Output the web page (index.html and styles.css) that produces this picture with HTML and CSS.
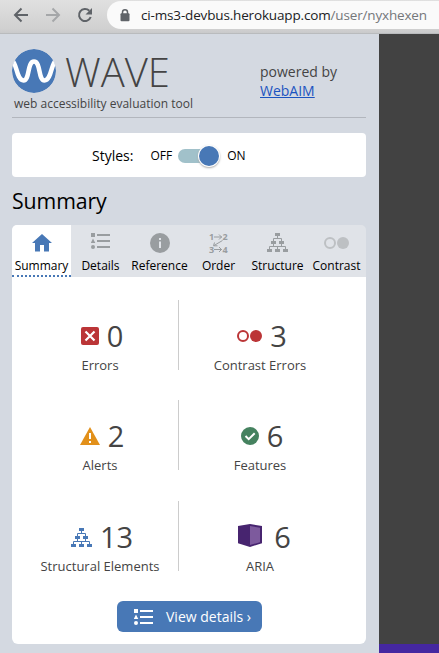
FILE: index.html
```html
<!DOCTYPE html>
<html lang="en">
<head>
<meta charset="utf-8">
<title>WAVE</title>
<link rel="stylesheet" href="styles.css">
</head>
<body>
<svg width="0" height="0" class="defs">
  <symbol id="list" viewBox="0 0 19 16"><path d="M0 0h4v4H0zM2 5.5L4.3 10H-.3zM6 1h13v2H6zM6 7h13v2H6zM6 13h13v2H6z"/><circle cx="2" cy="14" r="2"/></symbol>
  <symbol id="tree" viewBox="0 0 21 19"><path d="M8 0h5v3H8zM4 8h5v3H4zM12 8h5v3h-5zM0 16h5v3H0zM8 16h5v3H8zM16 16h5v3h-5z"/><path d="M10.5 3v2.500M6.500 8V5.500h8V8M6.500 11v2.500M14.500 11v2.500M2.500 16v-2.500h16V16M10.500 13.500V16" fill="none" stroke="currentColor"/></symbol>
  <symbol id="contrast" viewBox="0 0 25 12"><circle cx="6" cy="6" r="5" fill="none" stroke="currentColor" stroke-width="2"/><circle cx="19" cy="6" r="6"/></symbol>
</svg>
<header class="browser">
  <svg class="nav" width="92" height="34" viewBox="0 0 92 34">
    <g fill="none" stroke="#5f6368" stroke-width="2">
      <path d="M28 15H15.500M21.500 8.500L15 15l6.500 6.500"/>
      <path d="M46 15h12.500M52.500 8.500L59 15l-6.500 6.500" stroke="#a5a7a9"/>
      <path d="M89.300 10.800A6 6 0 1 0 90.700 17"/>
    </g>
    <path d="M92 8v6.500h-6.500z" fill="#5f6368"/>
  </svg>
  <div class="address">
    <svg width="10" height="13" viewBox="0 0 10 13"><path d="M2.500 5V3.300a2.500 2.500 0 0 1 5 0V5" fill="none" stroke="#5f6368" stroke-width="1.500"/><rect x="0.500" y="4.200" width="9" height="8" rx="1" fill="#5f6368"/></svg>
    <span class="url">ci-ms3-devbus.herokuapp.com<span class="path">/user/nyxhexen</span></span>
  </div>
</header>
<main>
  <aside class="panel">
    <div class="brand">
      <div>
        <div class="logo">
          <svg width="44" height="44" viewBox="0 0 44 44"><clipPath id="disc"><circle cx="22" cy="22" r="22"/></clipPath><g clip-path="url(#disc)"><circle cx="22" cy="22" r="22" fill="#4878b6"/><path d="M1 12.500C4.500 15 5 31.500 11.500 31.500C18 31.500 15 12.500 22 12.500S26 31.500 32.500 31.500C39 31.500 39.500 15 43 12.500" fill="none" stroke="#fff" stroke-width="4.500" stroke-linecap="round"/></g></svg>
          <h1>WAVE</h1>
        </div>
        <p class="tagline">web accessibility evaluation tool</p>
      </div>
      <p class="powered">powered by<br><a href="#">WebAIM</a></p>
    </div>
    <div class="styles-box"><span class="styles-label">Styles:</span><span class="state">OFF</span><span class="toggle"><i></i></span><span>ON</span></div>
    <h2>Summary</h2>
    <nav class="tabs">
      <div class="tab active"><svg width="20" height="18" viewBox="0 0 20 18"><path d="M10 0L0 9h3v8.500h5V11h4v6.500h5V9h3z"/></svg><span>Summary</span></div>
      <div class="tab list"><svg width="19" height="16"><use href="#list"/></svg><span>Details</span></div>
      <div class="tab"><svg width="20" height="20" viewBox="0 0 20 20"><circle cx="10" cy="10" r="10"/><path d="M9 5h2v2H9zM9 8.500h2V15H9z" fill="#e0e3e8"/></svg><span>Reference</span></div>
      <div class="tab order"><svg width="20" height="20" viewBox="0 0 20 20"><text x="0" y="7">1</text><text x="13.500" y="7">2</text><text x="0" y="20">3</text><text x="13.500" y="20">4</text><path d="M5 4h8M10 1.500L12.500 4 10 6.500M5 16.500h8M10 14l2.500 2.500L10 19M13.500 7.500L5 12.500M5.500 9.500L4.500 12.800H8.500" fill="none" stroke="currentColor"/></svg><span>Order</span></div>
      <div class="tab"><svg width="21" height="19"><use href="#tree"/></svg><span>Structure</span></div>
      <div class="tab disabled"><svg width="25" height="12"><use href="#contrast"/></svg><span>Contrast</span></div>
    </nav>
    <section class="summary">
      <div class="stats">
        <div class="stat errors"><div class="count"><svg width="18" height="18" viewBox="0 0 18 18"><rect width="18" height="18" rx="2"/><path d="M4.500 4.500l9 9M13.500 4.500l-9 9" stroke="#fff" stroke-width="2.200"/></svg><b>0</b></div><p>Errors</p></div>
        <div class="stat contrast"><div class="count"><svg width="25" height="12"><use href="#contrast"/></svg><b>3</b></div><p>Contrast Errors</p></div>
        <div class="stat alerts"><div class="count"><svg width="20" height="18" viewBox="0 0 20 18"><path d="M10 0l10 18H0z"/><path d="M9 6h2v6H9zM9 14h2v2H9z" fill="#fff"/></svg><b>2</b></div><p>Alerts</p></div>
        <div class="stat features"><div class="count"><svg width="18" height="18" viewBox="0 0 18 18"><circle cx="9" cy="9" r="9"/><path d="M4.500 9l3.200 3.200 6-6" fill="none" stroke="#fff" stroke-width="2"/></svg><b>6</b></div><p>Features</p></div>
        <div class="stat structural"><div class="count"><svg width="21" height="19"><use href="#tree"/></svg><b>13</b></div><p>Structural Elements</p></div>
        <div class="stat aria"><div class="count"><svg width="24" height="23" viewBox="0 0 24 24" preserveAspectRatio="none"><path d="M0 2L12 0l12 2v18l-12 4L0 20z" fill="#47246f"/><path d="M12 2l10 2v15l-10 3z" fill="#7d5a9d"/></svg><b>6</b></div><p>ARIA</p></div>
      </div>
      <button class="details"><svg width="19" height="16"><use href="#list"/></svg><span>View details ›</span></button>
    </section>
  </aside>
  <div class="site"><div class="site-footer"></div></div>
</main>
</body>
</html>
```

FILE: styles.css
```css
* { box-sizing: border-box; }
body { margin: 0; width: 439px; height: 653px; overflow: hidden; font-family: "Open Sans", sans-serif; font-size: 13px; color: #000; }
p, h1, h2 { margin: 0; font-weight: 400; }
svg { display: block; flex: none; fill: currentColor; overflow: visible; }
.defs { position: absolute; }
.browser { height: 34px; display: flex; background: linear-gradient(#e0e0e0, #d0d0d0 29px, #c9cacb 33px, #b9bbbd 33px); }
.nav { margin-right: 15px; }
.address { flex: 1; height: 28px; margin-top: 1px; display: flex; align-items: center; padding-left: 13px; background: #fafafa; border-radius: 14px 0 0 14px; }
.url { margin-left: 11px; font-size: 13.5px; letter-spacing: -0.16px; color: #202124; white-space: nowrap; }
.path { color: #74777a; }
main { display: flex; height: 619px; }
.panel { width: 379px; padding: 0 13px 0 12px; background: #d4d9e1; }
.brand { height: 84px; display: flex; justify-content: space-between; border-bottom: 1px solid #b2b6bd; }
.logo { display: flex; height: 61px; padding-top: 15px; }
.logo h1 { height: 46px; margin-left: 9px; font-size: 40px; line-height: 46px; font-weight: 300; color: #444; }
.tagline { margin: 0 0 0 2px; font-size: 12px; line-height: 18px; color: #444; }
.powered { width: 106px; padding-top: 28px; font-size: 14px; line-height: 19px; color: #444; }
a { color: #1b54c0; }
.styles-box { height: 44px; margin-top: 15px; display: flex; align-items: center; padding-left: 80px; background: #fff; border-radius: 4px; font-size: 12px; }
.styles-label { margin-right: 13px; font-size: 14px; }
.styles-box .state { margin: 0 2px 0 4px; }
.toggle { width: 41px; height: 14px; margin: 2px 8px 0 4px; display: flex; align-items: center; justify-content: flex-end; background: #a1c1ca; border-radius: 7px; }
.toggle i { width: 20px; height: 20px; border-radius: 50%; background: #4878b6; box-shadow: 0 0 0 1px #fff, 0 1px 2px 1px #aaa; }
h2 { height: 48px; font-size: 21.3px; line-height: 48px; letter-spacing: -0.1px; }
.tabs { height: 52px; display: grid; grid-template-columns: repeat(6, 59px); background: #e0e3e8; border-radius: 5px 5px 0 0; overflow: hidden; }
.tab { height: 52px; display: grid; grid-template-rows: 32px 18px; align-content: start; justify-items: center; align-items: center; font-size: 12px; white-space: nowrap; }
.tab svg { margin-top: 3px; color: #999da0; }
.tab.list svg { margin-top: 0; }
.tab span { line-height: 18px; }
.tab.active { background: #fff; border-bottom: 2px dotted #4878b6; }
.tab.active svg { color: #4878b6; }
.tab.disabled svg { color: #bdc0c3; }
.order text { font: bold 9px "Open Sans", sans-serif; }
.summary { height: 367px; padding-top: 23px; background: #fff; border-radius: 0 0 6px 6px; }
.stats { display: grid; grid-template-columns: 157px 162px; grid-template-rows: 70px 70px 70px; row-gap: 30px; margin-left: 10px; }
.stat { height: 70px; display: flex; flex-direction: column; align-items: center; color: #444; }
.stat:nth-child(odd) { border-right: 1px solid #ccc; }
.stat:nth-child(n+5) { margin-top: 1px; }
.count { display: flex; align-items: center; gap: 8px; height: 56px; margin-left: 4px; padding-top: 16px; }
.count b { font-size: 29px; line-height: 40px; font-weight: 400; color: #444; }
.stat p { line-height: 18px; white-space: nowrap; }
.errors svg, .contrast svg { color: #bb3537; }
.alerts svg { color: #e2901a; }
.features svg { color: #45825f; }
.structural svg { color: #4878b6; }
.aria .count { gap: 12px; margin-left: 9px; }
.aria svg { margin-top: -3px; }
.details { display: flex; align-items: center; width: 145px; height: 31px; margin: 31px 0 0 105px; padding: 0 0 0 17px; border: 0; border-radius: 6px; background: #4878b6; color: #fff; font: 14px "Open Sans", sans-serif; gap: 13px; white-space: nowrap; }
.site { flex: 1; display: flex; flex-direction: column; justify-content: flex-end; background: #424242; }
.site-footer { height: 9px; background: #4527a0; }
```
